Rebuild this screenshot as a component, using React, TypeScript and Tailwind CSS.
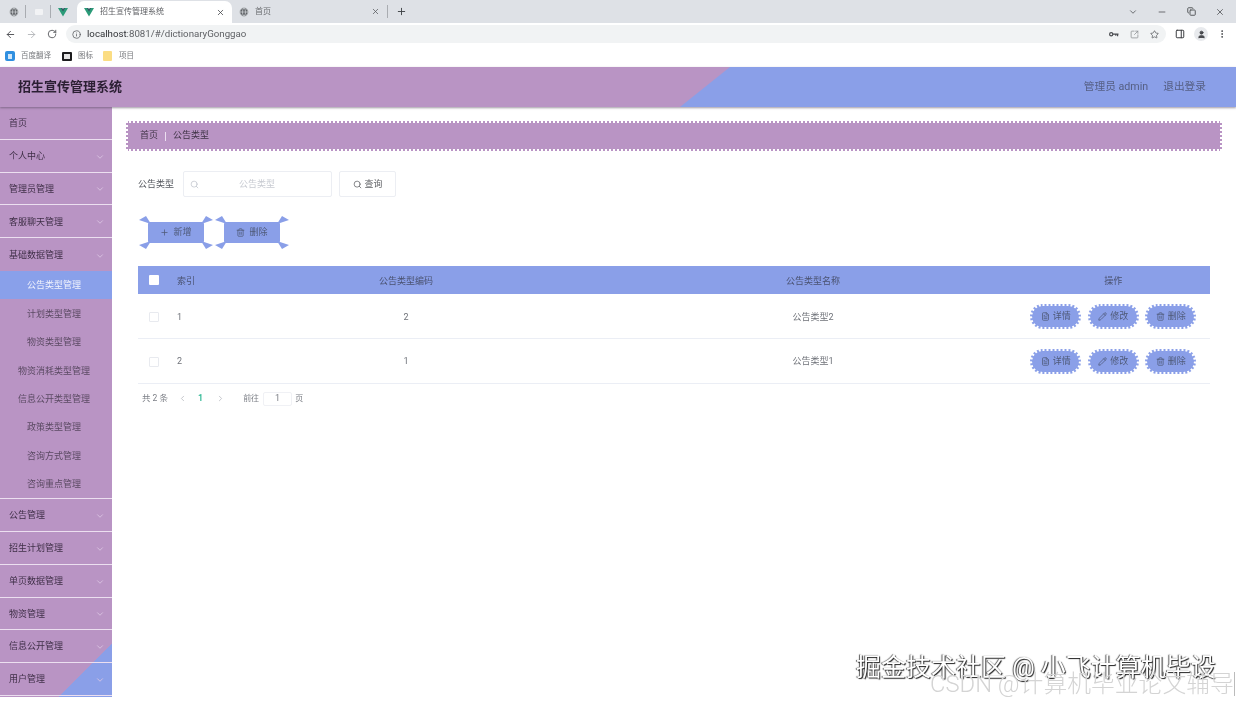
import {
  ArrowLeft,
  ArrowRight,
  ChevronDown,
  ChevronLeft,
  ChevronRight,
  Copy,
  FileText,
  Globe,
  Info,
  Minus,
  MoreVertical,
  PanelRight,
  Pencil,
  Plus,
  RotateCw,
  Search,
  SquareArrowOutUpRight,
  Star,
  Trash2,
  User,
  X,
} from "lucide-react";

function VueMark() {
  return (
    <svg width="10" height="10" viewBox="0 0 10 10" className="shrink-0">
      <polygon points="0,1 4,1 5,3 6,1 10,1 5,9.5" fill="#2b9b78" />
      <polygon points="3,1 5,4.4 7,1 5.8,1 5,2.4 4.2,1" fill="#34495e" />
    </svg>
  );
}

function KeyIcon() {
  return (
    <svg width="10" height="7" viewBox="0 0 10 7" fill="none" stroke="#4a4c50" strokeWidth="1.2">
      <circle cx="2.2" cy="3.2" r="1.6" />
      <path d="M4 3.2h5.5M8.6 3.2v2M6.8 3.2v1.6" />
    </svg>
  );
}

function BrowserChrome() {
  return (
    <div className="text-[#4a4c50]">
      {/* tab strip */}
      <div className="h-[23px] bg-[#dee1e6] flex items-end">
        <div className="w-[77px] h-[23px] flex items-center shrink-0">
          <Globe size={10} fill="#5f6266" className="ml-[9px] text-[#c9ccd0]" />
          <span className="ml-[6px] w-px h-[13px] bg-[#a9acb1]" />
          <span className="ml-[9px] w-[8px] h-[6px] bg-[#f2f3f5] rounded-[1px]" />
          <span className="ml-[7px] w-px h-[13px] bg-[#a9acb1]" />
          <span className="ml-[7px]"><VueMark /></span>
        </div>
        <div className="w-[155px] h-[22px] bg-white rounded-t-[7px] flex items-center pl-[7px] pr-[7px] shrink-0">
          <VueMark />
          <span className="ml-[6px] text-[8px] text-[#5c5e62]">招生宣传管理系统</span>
          <X size={9} className="ml-auto text-[#3c3f43]" />
        </div>
        <div className="w-[155px] h-[23px] flex items-center pl-[7px] pr-[7px] shrink-0">
          <Globe size={10} fill="#5f6266" className="text-[#c9ccd0]" />
          <span className="ml-[6px] text-[8px] text-[#6a6c70]">首页</span>
          <X size={9} className="ml-auto text-[#55585c]" />
        </div>
        <div className="h-[23px] flex items-center shrink-0">
          <span className="w-px h-[13px] bg-[#a9acb1]" />
          <Plus size={11} className="ml-[8px] text-[#3c3f43]" />
        </div>
        <div className="ml-auto h-[23px] flex items-center pr-[11px] gap-[19.5px] text-[#55585c]">
          <ChevronDown size={10} />
          <Minus size={10} />
          <Copy size={9} strokeWidth={2.6} />
          <X size={10} />
        </div>
      </div>
      {/* address bar */}
      <div className="h-[22px] bg-white flex items-center">
        <div className="w-[66px] flex items-center pl-[5px] gap-[10px] shrink-0">
          <ArrowLeft size={11} className="text-[#4a4c50]" />
          <ArrowRight size={11} className="text-[#b4b6b9]" />
          <RotateCw size={10} className="text-[#4a4c50]" />
        </div>
        <div className="w-[1100px] h-[18px] bg-[#f1f3f4] rounded-full flex items-center pl-[6px] pr-[7px] shrink-0">
          <Info size={9} className="text-[#55585c]" />
          <span className="ml-[6px] pt-[1px] text-[9.7px] text-[#5f6165]">
            <span className="text-[#303236]">localhost</span>:8081/#/dictionaryGonggao
          </span>
          <div className="ml-auto flex items-center gap-[11px] text-[#55585c]">
            <KeyIcon />
            <SquareArrowOutUpRight size={9} className="text-[#8a8c90]" />
            <Star size={9} />
          </div>
        </div>
        <div className="ml-[9px] flex items-center gap-[9px] text-[#3c3e42]">
          <PanelRight size={10} strokeWidth={2.4} />
          <span className="w-[14px] h-[14px] rounded-full bg-[#e8eaed] flex items-center justify-center">
            <User size={9} fill="#4a4c50" />
          </span>
          <MoreVertical size={10} />
        </div>
      </div>
      {/* bookmarks */}
      <div className="h-[22px] bg-white flex items-center pl-[5px] text-[7.5px] text-[#77797d]">
        <span className="w-[10px] h-[10px] rounded-[2px] bg-[#2f8fe0] flex items-center justify-center">
          <span className="w-[4px] h-[5px] bg-[#cfe6fa]" />
        </span>
        <span className="ml-[6px]">百度翻译</span>
        <span className="ml-[11px] w-[10px] h-[9px] rounded-[1px] border-2 border-[#1c1c1e] bg-[#e4e4e4]" />
        <span className="ml-[6px]">图标</span>
        <span className="ml-[10px] w-[9px] h-[10px] rounded-[1px] bg-[#fbdd83]" />
        <span className="ml-[7px]">项目</span>
      </div>
    </div>
  );
}

function SideItem({ label, arrow = true }: { label: string; arrow?: boolean }) {
  return (
    <div className="h-[32.8px] border-b border-[#ecdff0] flex items-center pt-[2px] pl-[9px] pr-[7px] text-[9px] text-[#3f2f47]">
      <span>{label}</span>
      {arrow && <ChevronDown size={10} className="ml-auto text-[#dcc8e4]" />}
    </div>
  );
}

function SubItem({ label, active }: { label: string; active?: boolean }) {
  return (
    <div
      className={
        active
          ? "h-[28.4px] bg-[#89a0ea] flex items-center justify-center pt-[2px] pr-[4px] text-[9px] text-[#f0f2fc]"
          : "h-[28.4px] flex items-center justify-center pt-[2px] pr-[4px] text-[9px] text-[#5b4a63]"
      }
    >
      {label}
    </div>
  );
}

function Sidebar() {
  return (
    <div className="w-[112px] h-[590px] shrink-0 bg-[linear-gradient(315deg,#8a9fe8_38px,#b994c4_38px)]">
      <SideItem label="首页" arrow={false} />
      <SideItem label="个人中心" />
      <SideItem label="管理员管理" />
      <SideItem label="客服聊天管理" />
      <div className="h-[32.8px] flex items-center pt-[2px] pl-[9px] pr-[7px] text-[9px] text-[#3f2f47]">
        <span>基础数据管理</span>
        <ChevronDown size={10} className="ml-auto text-[#dcc8e4]" />
      </div>
      <SubItem label="公告类型管理" active />
      <SubItem label="计划类型管理" />
      <SubItem label="物资类型管理" />
      <SubItem label="物资消耗类型管理" />
      <SubItem label="信息公开类型管理" />
      <SubItem label="政策类型管理" />
      <SubItem label="咨询方式管理" />
      <div className="border-b border-[#ecdff0]">
        <SubItem label="咨询重点管理" />
      </div>
      <SideItem label="公告管理" />
      <SideItem label="招生计划管理" />
      <SideItem label="单页数据管理" />
      <SideItem label="物资管理" />
      <SideItem label="信息公开管理" />
      <SideItem label="用户管理" />
    </div>
  );
}

function FlareButton({ icon, label }: { icon: React.ReactNode; label: string }) {
  return (
    <div className="relative w-[56px] h-[21px] bg-[#8a9fe8] rounded-[2px] flex items-center justify-center gap-[4px] text-[9px] text-[#4f5a78]">
      <svg width="74" height="33" viewBox="0 0 74 33" className="absolute left-[-9px] top-[-6px]" fill="#8a9fe8">
        <polygon points="0,4 7,0 12,8" />
        <polygon points="74,4 67,0 62,8" />
        <polygon points="0,29 7,33 12,25" />
        <polygon points="74,29 67,33 62,25" />
      </svg>
      {icon}
      <span>{label}</span>
    </div>
  );
}

function RowButton({ icon, label }: { icon: React.ReactNode; label: string }) {
  return (
    <div className="w-[51px] h-[25px] bg-[#8a9fe8] rounded-full border-2 border-dotted border-white flex items-center justify-center gap-[3px] text-[9px] text-[#4f5a78]">
      {icon}
      <span>{label}</span>
    </div>
  );
}

function TableRow({ index, code, name }: { index: string; code: string; name: string }) {
  return (
    <div className="grid grid-cols-[32px_32.5px_407px_407px_193.5px] h-[44.8px] pt-[2px] items-center border-b border-[#ebeef5] text-[9px] text-[#70737a]">
      <span className="ml-[11px] w-[10px] h-[10px] border border-[#e8eaef] rounded-[1px]" />
      <span className="pl-[7px] pt-[1px]">{index}</span>
      <span className="text-center pt-[1px]">{code}</span>
      <span className="text-center pt-[1px]">{name}</span>
      <div className="flex items-center justify-center gap-[6.5px]">
        <RowButton icon={<FileText size={9} />} label="详情" />
        <RowButton icon={<Pencil size={9} />} label="修改" />
        <RowButton icon={<Trash2 size={9} />} label="删除" />
      </div>
    </div>
  );
}

function Content() {
  return (
    <div className="flex-1 pt-[14px] px-[14px]">
      <div className="h-[30px] bg-[#b994c4] border-2 border-dotted border-white flex items-center pl-[12px] text-[9px] text-[#3f3346]">
        <span>首页</span>
        <span className="mx-[7px] w-px h-[9px] bg-[#ecdff0]" />
        <span>公告类型</span>
      </div>

      <div className="pl-[12px] w-[1084px]">
        <div className="mt-[20px] flex items-center h-[26px] text-[9px]">
          <span className="text-[#55585f] pt-[2px]">公告类型</span>
          <div className="ml-[9px] w-[149px] h-[26px] border border-[#eceef3] rounded-[2px] flex items-center pl-[6px]">
            <Search size={9} className="text-[#c0c4cc]" />
            <span className="ml-[40px] pt-[2px] text-[#c8cbd2]">公告类型</span>
          </div>
          <div className="ml-[7px] w-[57px] h-[26px] border border-[#eceef3] rounded-[2px] flex items-center justify-center gap-[3px] text-[#606266]">
            <Search size={9} />
            <span className="pt-[2px]">查询</span>
          </div>
        </div>

        <div className="mt-[25px] ml-[10px] flex gap-[20px]">
          <FlareButton icon={<Plus size={9} />} label="新增" />
          <FlareButton icon={<Trash2 size={9} />} label="删除" />
        </div>

        <div className="mt-[23px]">
          <div className="grid grid-cols-[32px_32.5px_407px_407px_193.5px] h-[28px] items-center bg-[#8a9fe8] text-[9px] text-[#4a5270]">
            <span className="ml-[11px] w-[10px] h-[10px] bg-white rounded-[1px]" />
            <span className="pl-[7px] pt-[3px]">索引</span>
            <span className="text-center pt-[3px]">公告类型编码</span>
            <span className="text-center pt-[3px]">公告类型名称</span>
            <span className="text-center pt-[3px]">操作</span>
          </div>
          <TableRow index="1" code="2" name="公告类型2" />
          <TableRow index="2" code="1" name="公告类型1" />
        </div>

        <div className="mt-[8px] flex items-center h-[14px] pl-[4px] text-[8px] text-[#7c7f86]">
          <span className="text-[8.5px]">共 2 条</span>
          <ChevronLeft size={9} className="ml-[10px] text-[#b4b7bd]" />
          <span className="ml-[11px] text-[9px] text-[#25b58f] font-medium">1</span>
          <ChevronRight size={9} className="ml-[13px] text-[#b4b7bd]" />
          <span className="ml-[18px]">前往</span>
          <span className="ml-[4px] w-[29px] h-[14px] border border-[#f0f1f5] rounded-[2px] flex items-center justify-center text-[9px]">1</span>
          <span className="ml-[3px]">页</span>
        </div>
      </div>
    </div>
  );
}

export default function App() {
  return (
    <div className="relative w-[1236px] h-[702px] overflow-hidden bg-white font-['Roboto','Noto_Sans_CJK_SC',sans-serif] blur-[0.5px]">
      <BrowserChrome />

      <div className="h-[40px] flex bg-[#b994c4] shadow-[0_1px_2px_rgba(80,70,90,0.55)] relative">
        <div className="pl-[18px] flex items-center text-[13px] font-bold text-[#2b1f33]">招生宣传管理系统</div>
        <div className="ml-auto w-[556px] bg-[#8a9fe8] [clip-path:polygon(50px_0,100%_0,100%_100%,0_100%)] flex items-center justify-end pr-[30px] text-[10.7px] text-[#566085]">
          <span>管理员 admin</span>
          <span className="ml-[15px]">退出登录</span>
        </div>
      </div>

      <div className="flex">
        <Sidebar />
        <Content />
      </div>

      {/* screenshot watermarks */}
      <div className="absolute left-[856px] top-[651px] text-[25px] leading-[34px] whitespace-nowrap text-white [text-shadow:1px_1px_1px_#222,-1px_0_1px_#555]">
        掘金技术社区 @ 小飞计算机毕设
      </div>
      <div className="absolute left-[930px] top-[668px] text-[23.8px] leading-[32px] font-light whitespace-nowrap text-[#d4d4d4]">
        CSDN @计算机毕业论文辅导
      </div>
      <span className="absolute left-[1234px] top-[672px] w-px h-[24px] bg-[#bbbbbb]" />
    </div>
  );
}
